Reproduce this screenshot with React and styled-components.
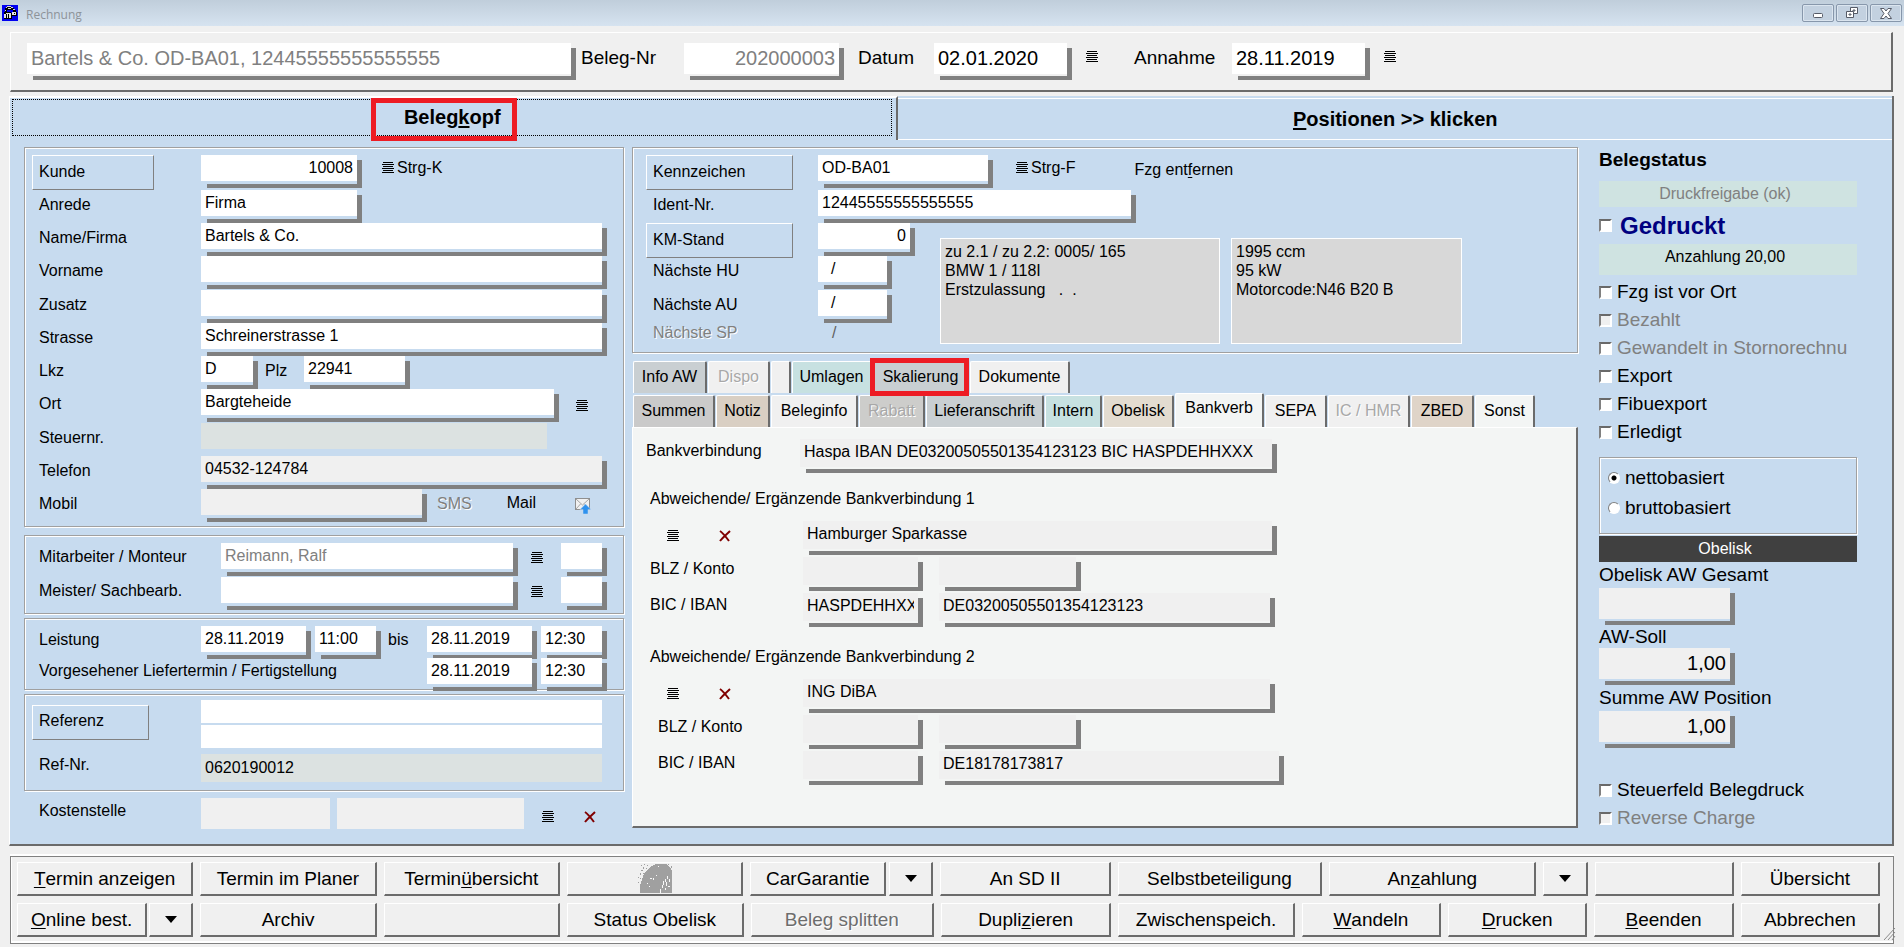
import React, { useState } from 'react'
import styled, { createGlobalStyle, css } from 'styled-components'

const Global = createGlobalStyle`
  * {
    box-sizing: border-box;
  }
  body {
    margin: 0;
    background: #f0f0f0;
    font-family: "Liberation Sans", Arial, sans-serif;
    font-size: 16px;
    color: #000;
  }
  button, input {
    font: inherit;
    color: inherit;
    border-radius: 0;
    margin: 0;
  }
  button {
    padding: 0;
    white-space: nowrap;
  }
  u {
    text-decoration-skip-ink: none;
    text-underline-offset: 2px;
  }
`

const Page = styled.div`
  min-width: 1720px;
  border-bottom: 1px solid #d6e3f0;
  padding-bottom: 4px;
`

/* title bar */
const TitleBar = styled.header`
  height: 26px;
  display: flex;
  align-items: center;
  gap: 8px;
  padding: 0 2px;
  background: linear-gradient(#c0cedb, #d6e3f0);
`
const Title = styled.span`
  flex: 1;
  font-family: "Open Sans", "Noto Sans", sans-serif;
  font-size: 12px;
  color: #8d9399;
  padding-top: 3px;
`
const WindowButtons = styled.div`
  display: flex;
  gap: 2px;
`
const WindowButton = styled.button`
  width: 32px;
  height: 18px;
  display: flex;
  align-items: center;
  justify-content: center;
  border: 1px solid #8797ab;
  border-radius: 2px;
  background: #c3d1e0;
  box-shadow: inset 0 0 0 1px #dbe5ef;
`

/* inputs with the hard grey drop shadow */
const sizes = {
  sm: { h: 26, gap: 3, font: 16, lift: 0 },
  md: { h: 28, gap: 2, font: 16, lift: 3 },
  lg: { h: 31, gap: 2, font: 20, lift: 0 },
}
const tones = {
  white: '#fff',
  grey: '#f0f0f0',
  dull: '#dce2e1',
}
const Box = styled.span`
  flex: ${p => (p.$w ? `0 0 ${p.$w}px` : '1 1 0')};
  min-width: 0;
  display: block;
  ${p => p.$w && css`width: ${p.$w}px;`}
  ${p => !p.$flat && css`
    padding: 0 5px ${sizes[p.$size].gap + 4}px 0;
    background:
      linear-gradient(#808080, #808080) right bottom / 5px calc(100% - 5px) no-repeat,
      linear-gradient(#808080, #808080) right bottom / calc(100% - 6px) 4px no-repeat;
  `}
`
const Input = styled.input`
  display: block;
  width: 100%;
  height: ${p => p.$h || sizes[p.$size].h}px;
  font-size: ${p => sizes[p.$size].font}px;
  border: none;
  outline: none;
  padding: 0 4px ${p => sizes[p.$size].lift}px;
  background: ${p => tones[p.$tone]};
  color: ${p => (p.$dim ? '#808080' : '#000')};
  text-align: ${p => (p.$right ? 'right' : 'left')};
  white-space: pre;
`
const Field = ({ id, label, value = '', w, size = 'sm', tone = 'white', flat, h, dim, right }) => {
  const [text, setText] = useState(value)
  return (
    <Box $w={w} $size={size} $flat={flat}>
      <Input
        id={id}
        aria-label={label}
        value={text}
        onChange={evt => setText(evt.target.value)}
        $size={size}
        $tone={tone}
        $h={h}
        $dim={dim}
        $right={right}
      />
    </Box>
  )
}

/* small icons */
const IconButton = styled.button`
  flex: none;
  display: flex;
  border: none;
  background: none;
`
const ListIcon = () => (
  <svg width="12" height="12" shapeRendering="crispEdges">
    <path d="M1 0h10v1H1zM0 2h12v1H0zM1 4h10v1H1zM0 6h12v1H0zM1 8h10v1H1zM0 10h12v1H0z" />
  </svg>
)
const ListButton = ({ label = 'Auswahl' }) => (
  <IconButton aria-label={label}><ListIcon /></IconButton>
)
const DeleteButton = () => (
  <IconButton aria-label="Löschen">
    <svg width="12" height="12" fill="none" stroke="#800000" strokeWidth="2">
      <path d="M1 1C4 3 7 7 10 11M11 1C8 4 4 7 1 11" />
    </svg>
  </IconButton>
)
const MailIcon = () => (
  <svg width="18" height="17">
    <rect x="1.500" y="1.500" width="14" height="11" fill="#f1f1f1" stroke="#8f8f8f" />
    <path d="M2 2l6.500 6L15 2M2 12l4.500-5M15 12l-4.500-5" fill="none" stroke="#a5a5a5" />
    <path d="M11.500 7l5.500 5.500h-3V17H9v-4.500H6z" fill="#2f92ee" stroke="#c7dbef" strokeWidth=".5" />
  </svg>
)
const AppIcon = () => (
  <svg width="16" height="16" shapeRendering="crispEdges">
    <rect width="16" height="16" fill="#0000f0" />
    <path d="M4 2h6v1h2v2h2v2h-3V5H5v2H3V3h1z" fill="#000" />
    <path d="M5 1h4v1H5zM4 2h1v1H4zM9 2h2v1H9zM6 3h3v1H6zM11 4h2v1h-2zM3 5h1v1H3z" fill="#d8d8d8" />
    <path d="M2 7h7v2H2zM10 7h5v4h-5z" fill="#000" />
    <path d="M2 8h7v5H2zM10 7h4v3h-4z" fill="#e4e4e4" />
    <path d="M2 8h2v1H2zM4 9h1v4H4zM6 9h1v4H6zM9 8h1v6H9zM2 13h8v1H2zM12 8h1v1h-1z" fill="#000" />
  </svg>
)
const PrintIcon = () => (
  <svg width="34" height="29" shapeRendering="crispEdges" fill="#a0a0a0">
    <path d="M2 29V22l2-7 3-7 5-5 6-3h10l4 3 2 4v22h-4v-7l-2-6-3 4-2 6-2 3z" />
    <path d="M28 29h6V12l-3-2-4 6-4 6-2 7z" />
    <path d="M3 1h1v1H3zM6 0h1v1H6zM9 1h1v1H9zM5 3h1v2H5zM8 4h1v1H8zM3 6h2v1H3zM2 9h1v2H2zM5 9h1v1H5zM0 13h1v1H0zM2 14h1v1H2zM0 18h1v1H0zM30 0h1v1h-1zM33 2h1v2h-1z" />
    <path d="M12 14h2v1h-2zM15 14h1v2h-1zM9 19h1v1H9zM18 11h1v1h-1zM11 22h1v1h-1zM20 2h1v1h-1zM29 12h1v3h-1zM27 15h1v3h-1zM25 17h1v4h-1zM31 15h1v3h-1zM28 18h1v4h-1zM24 21h1v3h-1zM22 25h1v4h-1zM30 22h2v1h-2zM27 24h1v2h-1z" fill="#f8f8f8" />
  </svg>
)
const DownIcon = () => (
  <svg width="12" height="7"><path d="M0 0h12L6 7z" /></svg>
)

/* header strip */
const Header = styled.section`
  height: 60px;
  margin: 6px 11px 4px 10px;
  padding: 10px 16px 0;
  display: flex;
  align-items: flex-start;
  border: 1px solid #fff;
  border-right: 2px solid #6b6b6b;
  border-bottom: 2px solid #6b6b6b;
`
const HeaderLabel = styled.label`
  flex: none;
  width: ${p => p.$w}px;
  padding-left: ${p => p.$pad}px;
  font-size: 19px;
  line-height: 30px;
`
const HeaderIcon = styled.span`
  padding: 8px 0 0 14px;
`

/* big two-part tab head */
const Sheet = styled.main`
  margin: 0 10px 0 9px;
  background: #c7dbef;
  border-left: 1px solid #fff;
  border-right: 2px solid #6b6b6b;
  border-bottom: 2px solid #6b6b6b;
`
const SheetTabs = styled.div`
  display: grid;
  grid-template-columns: 888fr 993fr;
  height: 44px;
`
const SheetTab = styled.button`
  border: none;
  background: none;
  font-size: 20px;
  font-weight: bold;
  ${p => p.$active ? css`
    border-top: 2px solid #fff;
    border-right: 2px solid #6b6b6b;
    padding: 1px 4px 4px 2px;
  ` : css`
    margin-top: 2px;
    border-top: 1px solid #fff;
    border-bottom: 1px solid #fff;
  `}
`
const FocusRect = styled.span`
  height: 100%;
  display: flex;
  align-items: center;
  justify-content: center;
  border: 1px dotted #000;
`
const Marked = styled.span`
  position: relative;
  &::after {
    content: "";
    position: absolute;
    inset: ${p => p.$inset};
    border: 5px solid #ed1c24;
  }
`
const Columns = styled.div`
  display: grid;
  grid-template-columns: 600px minmax(0, 1fr) 271px;
  column-gap: 8px;
  padding: 7px 35px 12px 14px;
`
const Column = styled.div`
  display: flex;
  flex-direction: column;
`

/* etched groups */
const Group = styled.fieldset`
  margin: ${p => p.$top || 0}px 0 0;
  padding: ${p => p.$pad || '7px 16px 4px 7px'};
  min-width: 0;
  border: 1px solid #a0a0a0;
  box-shadow: 1px 1px 0 #fff, inset 1px 1px 0 #fff;
`
const Row = styled.div`
  display: flex;
  align-items: flex-start;
  height: ${p => p.$h || 33}px;
`
const Label = styled.label`
  flex: none;
  width: ${p => p.$w || 169}px;
  padding-left: 7px;
  line-height: ${p => p.$lh || 30}px;
  white-space: nowrap;
  ${p => p.$dim && css`
    color: #808080;
    text-shadow: 1px 1px 0 #fff;
  `}
`
const ButtonCell = styled.div`
  flex: none;
  width: ${p => p.$w || 169}px;
`
const LabelButton = styled.button`
  display: block;
  width: ${p => p.$w}px;
  height: 35px;
  padding: 0 0 2px 6px;
  text-align: left;
  background: none;
  border: 1px solid;
  border-color: #fff #808080 #808080 #fff;
`
const Side = styled.span`
  flex: none;
  display: flex;
  align-items: center;
  gap: 3px;
  height: ${p => p.$h || 26}px;
  padding-left: ${p => p.$pad || 0}px;
`
const FlatButton = styled.button`
  border: none;
  background: none;
  &:disabled {
    color: #808080;
    text-shadow: 1px 1px 0 #fff;
  }
`
const Gap = styled.span`
  flex: 0 0 ${p => p.$w}px;
`
const Stack = styled.div`
  flex: 1;
  display: grid;
  gap: 2px;
`

/* vehicle */
const Vehicle = styled.div`
  display: flex;
`
const VehicleRows = styled.div`
  width: 294px;
`
const InfoBox = styled.div`
  width: ${p => p.$w}px;
  height: 106px;
  margin: 15px 11px 0 0;
  padding: 3px 4px;
  border: 1px solid #fff;
  background: #d8d8d8;
  line-height: 19px;
  white-space: pre;
`
const Slash = styled.span`
  padding-left: 14px;
  line-height: 20px;
  color: #606060;
`

/* detail tabs */
const TabRow = styled.div`
  display: flex;
  align-items: flex-end;
  gap: 1px;
  height: 32px;
  margin-top: ${p => p.$top}px;
  padding-left: 1px;
`
const Tab = styled.button`
  width: ${p => p.$w}px;
  height: ${p => (p.$active ? 34 : 32)}px;
  flex: none;
  padding-bottom: ${p => (p.$active ? 5 : 1)}px;
  background: ${p => p.$bg};
  border: none;
  border-top: 1px solid #fff;
  border-left: 1px solid #fff;
  border-right: 2px solid #6b6b6b;
  border-radius: 2px 2px 0 0;
  &:disabled {
    color: #a8a8a8;
    text-shadow: 1px 1px 0 #fff;
  }
`
const Panel = styled.section`
  height: 401px;
  padding: 11px 0 0 13px;
  background: #f3f5f4;
  border: 1px solid #fff;
  border-right: 2px solid #6b6b6b;
  border-bottom: 2px solid #6b6b6b;
`
const PanelLabel = styled.label`
  flex: none;
  width: ${p => p.$w}px;
  padding-left: ${p => p.$pad || 0}px;
  line-height: 24px;
`
const Account = styled.div`
  padding-left: 4px;
`
const AccountTitle = styled.div`
  line-height: 20px;
  margin: ${p => p.$top}px 0 12px;
`
const AccountTools = styled.div`
  flex: none;
  width: 153px;
  padding: 9px 0 0 17px;
  display: flex;
  gap: 40px;
`

/* status column */
const Status = styled.aside`
  padding-left: 13px;
`
const StatusTitle = styled.div`
  font-size: 19px;
  font-weight: bold;
  line-height: 26px;
  margin-bottom: 8px;
`
const Banner = styled.div`
  height: ${p => p.$h || 26}px;
  line-height: 26px;
  padding-right: 6px;
  text-align: center;
  background: ${p => (p.$dark ? '#404040' : '#cfe3e1')};
  color: ${p => (p.$dark ? '#fff' : p.$dim ? '#808080' : '#000')};
`
const CheckLabel = styled.label`
  display: flex;
  align-items: center;
  gap: 5px;
  height: ${p => (p.$big ? 37 : 28)}px;
  font-size: 19px;
  white-space: nowrap;
  ${p => p.$big && css`
    gap: 8px;
    font-size: 24px;
    font-weight: bold;
    color: #000080;
  `}
  ${p => p.$dim && css`
    color: #808080;
  `}
`
const CheckBox = styled.input`
  appearance: none;
  flex: none;
  width: 13px;
  height: 13px;
  background: #fff;
  border: 2px solid;
  border-color: #696969 #fff #fff #808080;
  &:checked {
    background: #000;
  }
  &:disabled {
    background: #f0f0f0;
  }
`
const Radio = styled.input`
  appearance: none;
  flex: none;
  width: 12px;
  height: 12px;
  border: 1px solid;
  border-color: #808080 #fff #fff #808080;
  border-radius: 50%;
  background: #fff;
  &:checked {
    background: radial-gradient(circle, #000 2px, #fff 3px);
  }
`
const Checks = styled.div`
  margin: ${p => p.$m};
`
const RadioLabel = styled(CheckLabel)`
  height: 30px;
`
const SumLabel = styled.label`
  display: block;
  font-size: 19px;
  line-height: ${p => p.$lh || 26}px;
`

/* footer */
const Footer = styled.footer`
  position: relative;
  margin: 10px 10px 0;
  padding: 5px 13px 6px 6px;
  display: grid;
  gap: 7px;
  border: 1px solid #808080;
  box-shadow: 0 -2px 0 #fff, inset 1px -2px 0 #fff;
`
const FooterRow = styled.div`
  display: grid;
  grid-template-columns: ${p => p.$cols.map(c => `minmax(0, ${c}fr)`).join(' ')};
  gap: ${p => p.$gap || 7}px;
`
const Action = styled.button`
  min-width: 0;
  height: 34px;
  display: flex;
  align-items: center;
  justify-content: center;
  font-size: 19px;
  white-space: pre;
  background: #f0f0f0;
  border: 1px solid #fff;
  border-right: 2px solid #6b6b6b;
  border-bottom: 2px solid #6b6b6b;
  &:disabled {
    color: #6d6d6d;
    text-shadow: 1px 1px 0 #fff;
  }
`
const Grip = styled.svg`
  position: absolute;
  right: -3px;
  bottom: 3px;
`

const accounts = [
  { nr: 1, bank: 'Hamburger Sparkasse', bic: 'HASPDEHHXXX', iban: 'DE03200505501354123123', pad: 0, top: 16, bankW: 474, ibanW: 336 },
  { nr: 2, bank: 'ING DiBA', bic: '', iban: 'DE18178173817', pad: 8, top: 20, bankW: 472, ibanW: 345 },
]

const BankAccount = ({ nr, bank, bic, iban, pad, top, bankW, ibanW }) => (
  <Account>
    <AccountTitle $top={top}>Abweichende/ Ergänzende Bankverbindung {nr}</AccountTitle>
    <Row $h={36}>
      <AccountTools><ListButton /><DeleteButton /></AccountTools>
      <Field label={`Bank ${nr}`} value={bank} w={bankW} size="md" tone="grey" />
    </Row>
    <Row $h={36}>
      <PanelLabel htmlFor={`blz${nr}`} $w={153} $pad={pad}>BLZ / Konto</PanelLabel>
      <Field id={`blz${nr}`} w={120} size="md" tone="grey" />
      <Gap $w={16} />
      <Field label="Konto" w={142} size="md" tone="grey" />
    </Row>
    <Row $h={34}>
      <PanelLabel htmlFor={`bic${nr}`} $w={153} $pad={pad}>BIC / IBAN</PanelLabel>
      <Field id={`bic${nr}`} value={bic} w={120} size="md" tone="grey" />
      <Gap $w={16} />
      <Field label="IBAN" value={iban} w={ibanW} size="md" tone="grey" />
    </Row>
  </Account>
)

const topTabs = [
  { text: 'Info AW', w: 74, bg: '#c9cfd2' },
  { text: 'Dispo', w: 62, bg: '#f0f0f0', disabled: true },
  { text: '', w: 20, bg: '#f0f0f0' },
  { text: 'Umlagen', w: 80, bg: '#c7e1e1' },
  { text: 'Skalierung', w: 96, bg: '#c9cfd2', marked: true },
  { text: 'Dokumente', w: 100, bg: '#f0f0f0' },
]
const bottomTabs = [
  { text: 'Summen', w: 82, bg: '#cacaca' },
  { text: 'Notiz', w: 54, bg: '#d9cfc3' },
  { text: 'Beleginfo', w: 87, bg: '#f0f0f0' },
  { text: 'Rabatt', w: 66, bg: '#cdcdcb', disabled: true },
  { text: 'Lieferanschrift', w: 118, bg: '#c9cfd2' },
  { text: 'Intern', w: 57, bg: '#c7e1e1' },
  { text: 'Obelisk', w: 71, bg: '#e3dcd0' },
  { text: 'Bankverb', w: 89, bg: '#f3f5f4', active: true },
  { text: 'SEPA', w: 62, bg: '#f0f0f0' },
  { text: 'IC / HMR', w: 82, bg: '#f0f0f0', disabled: true },
  { text: 'ZBED', w: 63, bg: '#dfd4c8' },
  { text: 'Sonst', w: 60, bg: '#f3f5f4' },
]
const Tabs = ({ items, top }) => (
  <TabRow $top={top}>
    {items.map((t, i) => (
      <Tab key={i} $w={t.w} $bg={t.bg} $active={t.active} disabled={t.disabled} aria-label={t.text || 'leer'}>
        {t.marked ? <Marked $inset="-10px -11px -11px -13px">{t.text}</Marked> : t.text}
      </Tab>
    ))}
  </TabRow>
)

const Check = ({ text, disabled, dim, big }) => (
  <CheckLabel $dim={dim} $big={big}>
    <CheckBox type="checkbox" disabled={disabled} />
    {text}
  </CheckLabel>
)

const App = () => {
  const [base, setBase] = useState('netto')

  return (
    <Page>
      <Global />
      <TitleBar>
        <AppIcon />
        <Title>Rechnung</Title>
        <WindowButtons>
          <WindowButton aria-label="Minimieren">
            <svg width="12" height="12"><rect x="1.500" y="6.500" width="9" height="4" rx="1" fill="#fff" stroke="#555a66" /></svg>
          </WindowButton>
          <WindowButton aria-label="Wiederherstellen">
            <svg width="12" height="12" fill="#fff" stroke="#555a66">
              <path d="M4.500.5h7v6h-7zM7 3h2v1H7z" />
              <path d="M.5 4.500h7v6h-7zM3 7h2v1H3z" />
            </svg>
          </WindowButton>
          <WindowButton aria-label="Schließen">
            <svg width="12" height="11" fill="#fff" stroke="#555a66">
              <path d="M.5.5h3.500L6 3 8 .5h3.500L8 5.500l3.500 5H8L6 8l-2 2.500H.5L4 5.500z" />
            </svg>
          </WindowButton>
        </WindowButtons>
      </TitleBar>

      <Header>
        <Field label="Beleg" value="Bartels & Co. OD-BA01, 12445555555555555" w={549} size="lg" dim />
        <HeaderLabel htmlFor="belegnr" $w={108} $pad={5}>Beleg-Nr</HeaderLabel>
        <Field id="belegnr" value="202000003" w={160} size="lg" dim right />
        <HeaderLabel htmlFor="datum" $w={90} $pad={14}>Datum</HeaderLabel>
        <Field id="datum" value="02.01.2020" w={138} size="lg" />
        <HeaderIcon><ListButton /></HeaderIcon>
        <HeaderLabel htmlFor="annahme" $w={134} $pad={36}>Annahme</HeaderLabel>
        <Field id="annahme" value="28.11.2019" w={138} size="lg" />
        <HeaderIcon><ListButton /></HeaderIcon>
      </Header>

      <Sheet>
        <SheetTabs>
          <SheetTab $active>
            <FocusRect><Marked $inset="-8px -16px -12px -33px">Beleg<u>k</u>opf</Marked></FocusRect>
          </SheetTab>
          <SheetTab><u>P</u>ositionen &gt;&gt; klicken</SheetTab>
        </SheetTabs>

        <Columns>
          <Column>
            <Group>
              <Row $h={35}>
                <ButtonCell><LabelButton $w={122}>Kunde</LabelButton></ButtonCell>
                <Field label="Kunde" value="10008" w={161} right />
                <Side $pad={20}><ListButton /><FlatButton>Strg-K</FlatButton></Side>
              </Row>
              <Row>
                <Label htmlFor="anrede">Anrede</Label>
                <Field id="anrede" value="Firma" w={161} />
              </Row>
              <Row>
                <Label htmlFor="name">Name/Firma</Label>
                <Field id="name" value="Bartels & Co." />
              </Row>
              <Row $h={34}>
                <Label htmlFor="vorname">Vorname</Label>
                <Field id="vorname" />
              </Row>
              <Row>
                <Label htmlFor="zusatz">Zusatz</Label>
                <Field id="zusatz" />
              </Row>
              <Row>
                <Label htmlFor="strasse">Strasse</Label>
                <Field id="strasse" value="Schreinerstrasse 1" />
              </Row>
              <Row>
                <Label htmlFor="lkz">Lkz</Label>
                <Field id="lkz" value="D" w={57} />
                <Label htmlFor="plz" $w={46}>Plz</Label>
                <Field id="plz" value="22941" w={106} />
              </Row>
              <Row $h={34}>
                <Label htmlFor="ort">Ort</Label>
                <Field id="ort" value="Bargteheide" w={358} />
                <Side $pad={17} $h={34}><ListButton /></Side>
              </Row>
              <Row>
                <Label htmlFor="steuernr">Steuernr.</Label>
                <Field id="steuernr" w={346} tone="dull" flat />
              </Row>
              <Row>
                <Label htmlFor="telefon">Telefon</Label>
                <Field id="telefon" value="04532-124784" tone="grey" />
              </Row>
              <Row>
                <Label htmlFor="mobil">Mobil</Label>
                <Field id="mobil" w={226} tone="grey" />
                <Side $pad={10} $h={30}><FlatButton disabled>SMS</FlatButton></Side>
                <Side $pad={35} $h={28}><FlatButton>Mail</FlatButton></Side>
                <Side $pad={38} $h={33}><IconButton aria-label="Mail senden"><MailIcon /></IconButton></Side>
              </Row>
            </Group>

            <Group $top={8} $pad="7px 16px 2px 7px">
              {[['Mitarbeiter / Monteur', 'Reimann, Ralf'], ['Meister/ Sachbearb.', '']].map(([text, value]) => (
                <Row key={text} $h={34}>
                  <Label htmlFor={text} $w={189} $lh={28}>{text}</Label>
                  <Field id={text} value={value} w={297} dim />
                  <Side $pad={13} $h={30}><ListButton /></Side>
                  <Gap $w={18} />
                  <Field label={`${text} Kürzel`} w={46} />
                </Row>
              ))}
            </Group>

            <Group $top={4} $pad="7px 16px 0 7px">
              <Row $h={32}>
                <Label htmlFor="leistung" $lh={28}>Leistung</Label>
                <Field id="leistung" value="28.11.2019" w={110} />
                <Gap $w={4} />
                <Field label="Leistung Uhrzeit" value="11:00" w={66} />
                <Label htmlFor="bis" $w={46} $lh={28}>bis</Label>
                <Field id="bis" value="28.11.2019" w={110} />
                <Gap $w={4} />
                <Field label="bis Uhrzeit" value="12:30" w={66} />
              </Row>
              <Row $h={31}>
                <Label htmlFor="liefertermin" $w={395} $lh={26}>Vorgesehener Liefertermin / Fertigstellung</Label>
                <Field id="liefertermin" value="28.11.2019" w={110} />
                <Gap $w={4} />
                <Field label="Liefertermin Uhrzeit" value="12:30" w={66} />
              </Row>
            </Group>

            <Group $top={4} $pad="5px 16px 8px 7px">
              <Row $h={54}>
                <ButtonCell><Side $h={44}><LabelButton $w={117}>Referenz</LabelButton></Side></ButtonCell>
                <Stack>
                  <Field label="Referenz 1" flat h={23} w={401} />
                  <Field label="Referenz 2" flat h={23} w={401} />
                </Stack>
              </Row>
              <Row $h={28}>
                <Label htmlFor="refnr" $lh={22}>Ref-Nr.</Label>
                <Field id="refnr" value="0620190012" tone="dull" flat h={28} w={401} />
              </Row>
            </Group>

            <Checks $m="7px 0 0 8px">
              <Row $h={31}>
                <Label htmlFor="kostenstelle" $lh={26}>Kostenstelle</Label>
                <Field id="kostenstelle" w={129} tone="grey" flat h={31} />
                <Gap $w={7} />
                <Field label="Kostenstelle Bezeichnung" w={187} tone="grey" flat h={31} />
                <Side $pad={18} $h={38}><ListButton /></Side>
                <Side $pad={30} $h={38}><DeleteButton /></Side>
              </Row>
            </Checks>
          </Column>

          <Column>
            <Group $pad="7px 13px 8px 13px">
              <Row $h={35}>
                <ButtonCell $w={172}><LabelButton $w={147}>Kennzeichen</LabelButton></ButtonCell>
                <Field label="Kennzeichen" value="OD-BA01" w={175} />
                <Side $pad={23}><ListButton /><FlatButton>Strg-F</FlatButton></Side>
                <Side $pad={59} $h={29}><FlatButton>Fzg ent<u>f</u>ernen</FlatButton></Side>
              </Row>
              <Row>
                <Label htmlFor="ident" $w={172}>Ident-Nr.</Label>
                <Field id="ident" value="12445555555555555" w={318} />
              </Row>
              <Vehicle>
                <VehicleRows>
                  <Row>
                    <ButtonCell $w={172}><LabelButton $w={147}>KM-Stand</LabelButton></ButtonCell>
                    <Field label="KM-Stand" value="0" w={97} right />
                  </Row>
                  <Row $h={34}>
                    <Label htmlFor="hu" $w={172}>Nächste HU</Label>
                    <Field id="hu" value="  /" w={74} />
                  </Row>
                  <Row>
                    <Label htmlFor="au" $w={172}>Nächste AU</Label>
                    <Field id="au" value="  /" w={74} />
                  </Row>
                  <Row $h={20}>
                    <Label as="span" $w={172} $lh={20} $dim>Nächste SP</Label>
                    <Slash>/</Slash>
                  </Row>
                </VehicleRows>
                <InfoBox $w={280}>{'zu 2.1 / zu 2.2: 0005/ 165\nBMW 1 / 118I\nErstzulassung   .  .'}</InfoBox>
                <InfoBox $w={231}>{'1995 ccm\n95 kW\nMotorcode:N46 B20 B'}</InfoBox>
              </Vehicle>
            </Group>

            <Tabs items={topTabs} top={8} />
            <Tabs items={bottomTabs} top={2} />
            <Panel>
              <Row $h={34}>
                <PanelLabel htmlFor="bank" $w={154}>Bankverbindung</PanelLabel>
                <Field id="bank" value="Haspa IBAN DE03200505501354123123 BIC HASPDEHHXXX" w={477} size="md" tone="grey" />
              </Row>
              {accounts.map(a => <BankAccount key={a.nr} {...a} />)}
            </Panel>
          </Column>

          <Status>
            <StatusTitle>Belegstatus</StatusTitle>
            <Banner $dim>Druckfreigabe (ok)</Banner>
            <Check text="Gedruckt" big />
            <Banner $h={31}>Anzahlung 20,00</Banner>
            <Checks $m="3px 0 11px">
              <Check text="Fzg ist vor Ort" />
              <Check text="Bezahlt" disabled dim />
              <Check text="Gewandelt in Stornorechnu" dim />
              <Check text="Export" />
              <Check text="Fibuexport" />
              <Check text="Erledigt" />
            </Checks>
            <Group $pad="5px 8px 10px">
              <RadioLabel>
                <Radio type="radio" name="base" checked={base === 'netto'} onChange={() => setBase('netto')} />
                nettobasiert
              </RadioLabel>
              <RadioLabel>
                <Radio type="radio" name="base" checked={base === 'brutto'} onChange={() => setBase('brutto')} />
                bruttobasiert
              </RadioLabel>
            </Group>
            <Checks $m="2px 0 28px">
              <Banner $dark>Obelisk</Banner>
              <SumLabel htmlFor="awgesamt">Obelisk AW Gesamt</SumLabel>
              <Field id="awgesamt" w={136} size="lg" tone="grey" />
              <SumLabel htmlFor="awsoll" $lh={23}>AW-Soll</SumLabel>
              <Field id="awsoll" value="1,00" w={136} size="lg" tone="grey" right />
              <SumLabel htmlFor="awsumme">Summe AW Position</SumLabel>
              <Field id="awsumme" value="1,00" w={136} size="lg" tone="grey" right />
            </Checks>
            <Check text="Steuerfeld Belegdruck" />
            <Check text="Reverse Charge" disabled dim />
          </Status>
        </Columns>
      </Sheet>

      <Footer>
        <FooterRow $cols={[176, 176, 176, 176, 183, 170, 204, 207, 44, 139, 139]}>
          <Action><u>T</u>ermin anzeigen</Action>
          <Action>Termin im Planer</Action>
          <Action>Termin<u>ü</u>bersicht</Action>
          <Action aria-label="Logo"><PrintIcon /></Action>
          <FooterRow $cols={[136, 44]} $gap={3}>
            <Action>CarGarantie</Action>
            <Action aria-label="CarGarantie Menü"><DownIcon /></Action>
          </FooterRow>
          <Action>An SD II</Action>
          <Action>Selbstbeteiligung</Action>
          <Action>An<u>z</u>ahlung</Action>
          <Action aria-label="Anzahlung Menü"><DownIcon /></Action>
          <Action aria-label="leer" />
          <Action>Übersicht</Action>
        </FooterRow>
        <FooterRow $cols={[176, 176, 176, 176, 183, 170, 176, 139, 139, 139, 139]}>
          <FooterRow $cols={[130, 44]} $gap={2}>
            <Action><u>O</u>nline best.</Action>
            <Action aria-label="Online Menü"><DownIcon /></Action>
          </FooterRow>
          <Action>Archiv</Action>
          <Action aria-label="leer" />
          <Action>Status Obelisk</Action>
          <Action disabled>Beleg splitten</Action>
          <Action>Dupli<u>z</u>ieren</Action>
          <Action>Zwischenspeich.</Action>
          <Action><u>W</u>andeln</Action>
          <Action><u>D</u>rucken</Action>
          <Action><u>B</u>eenden</Action>
          <Action>Abbrechen</Action>
        </FooterRow>
        <Grip width="12" height="12" stroke="#8a8a8a" fill="none">
          <path d="M0 12L11 0M4 12l7-8M8 12l3-4" />
        </Grip>
      </Footer>
    </Page>
  )
}

export default App
